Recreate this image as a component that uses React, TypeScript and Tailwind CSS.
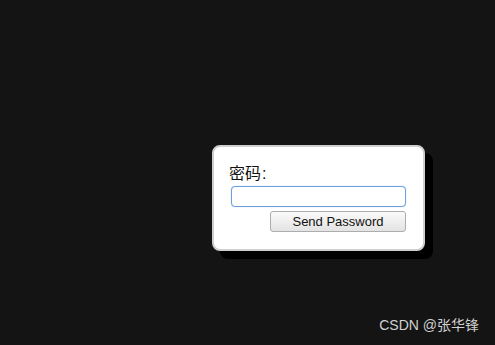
export default function App() {
  return (
    <div className="relative h-[345px] w-[495px] overflow-hidden bg-[#141414]" style={{ fontFamily: '"Liberation Sans", Arial, "Noto Sans CJK SC", sans-serif' }}>
      <div className="ml-[212px] pt-[145px]">
        <div className="w-[213px] h-[106px] rounded-[8px] border-2 border-[#cfcfcf] bg-white pl-[15px] pr-[17px] pt-[18px] shadow-[8px_8px_0_0_#000]">
          <div className="text-[16px] leading-[18px] text-[#111]">密码<span className="ml-[1px]">:</span></div>
          <input type="password" className="mt-[3px] ml-[2px] block h-[21px] w-[175px] rounded-[4px] border border-[#6e9fe0] bg-white shadow-[0_0_1px_0_#9cc0f0] outline-none" />
          <div className="mt-[4px] flex justify-end">
            <button className="h-[21px] w-[136px] rounded-[3px] border border-[#adadad] bg-gradient-to-b from-[#fafafa] to-[#e3e3e3] text-[13px] leading-[19px] text-[#111]">
              Send Password
            </button>
          </div>
        </div>
      </div>
      <div className="absolute right-[16px] bottom-[9px] text-[14px] text-[#d0d0d0]">CSDN @张华锋</div>
    </div>
  );
}
